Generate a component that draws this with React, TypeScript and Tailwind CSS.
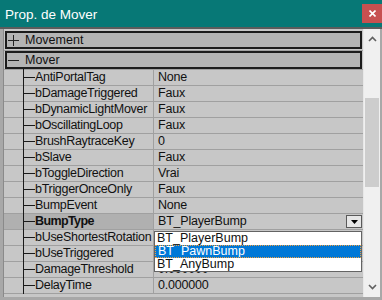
import React from 'react';

type Prop = { name: string; value: string; active?: boolean };

const props: Prop[] = [
  { name: 'AntiPortalTag', value: 'None' },
  { name: 'bDamageTriggered', value: 'Faux' },
  { name: 'bDynamicLightMover', value: 'Faux' },
  { name: 'bOscillatingLoop', value: 'Faux' },
  { name: 'BrushRaytraceKey', value: '0' },
  { name: 'bSlave', value: 'Faux' },
  { name: 'bToggleDirection', value: 'Vrai' },
  { name: 'bTriggerOnceOnly', value: 'Faux' },
  { name: 'BumpEvent', value: 'None' },
  { name: 'BumpType', value: 'BT_PlayerBump', active: true },
  { name: 'bUseShortestRotation', value: '' },
  { name: 'bUseTriggered', value: '' },
  { name: 'DamageThreshold', value: '0.000000' },
  { name: 'DelayTime', value: '0.000000' },
];

const Category = ({ label, open }: { label: string; open: boolean }) => (
  <div className="h-[18px] mx-[1px] border-2 border-[#1c1c1c] bg-[#b4b4b4] flex items-center">
    <span className="ml-[1px] mr-[6px] flex">
      <svg width="11" height="11" viewBox="0 0 11 11">
        <path d="M0 5.5h11" stroke="#222" strokeWidth="1" />
        {!open && <path d="M5.5 0v11" stroke="#222" strokeWidth="1" />}
      </svg>
    </span>
    <span className="text-[12.5px]">{label}</span>
  </div>
);

const Row = ({ p }: { p: Prop }) => (
  <div className="h-[16px] flex border-b border-[#a0a0a0]">
    <div className={`w-[19px] ${p.active ? 'bg-[#b0b0b0]' : ''}`} />
    <div className={`w-[130px] flex items-center relative ${p.active ? 'bg-[#b0b0b0]' : ''}`}>
      <div className="absolute left-0 top-[-1px] bottom-[-1px] w-[1px] bg-[#1a1a1a]" />
      <div className="w-[12px] h-[1px] bg-[#1a1a1a]" />
      <span className={p.active ? 'font-bold tracking-[-0.6px]' : 'tracking-[-0.3px]'}>{p.name}</span>
    </div>
    <div className="flex-1 border-l border-[#a0a0a0] flex items-center pl-[4px] relative">
      <span className="tracking-[-0.2px]">{p.value}</span>
      {p.active && (
        <div className="absolute right-[1px] top-[1px] w-[16px] h-[13px] bg-[#e6e6e6] border border-[#5a5a5a] flex items-center justify-center">
          <svg width="7" height="4" viewBox="0 0 7 4">
            <path d="M0 0h7L3.5 4z" fill="#000" />
          </svg>
        </div>
      )}
    </div>
  </div>
);

export default function App() {
  return (
    <div
      className="w-[382px] h-[300px] overflow-hidden flex flex-col bg-[#646464] text-[12.5px] text-[#111]"
      style={{ fontFamily: '"Liberation Sans", Arial, sans-serif' }}
    >
      <div className="h-[27px] bg-[#077876] flex items-start justify-between">
        <span className="text-white text-[13.5px] pl-[5px] pt-[5px]">Prop. de Mover</span>
        <div className="mt-[4px] w-[20px] h-[19px] bg-[#c75050] flex items-center justify-center">
          <svg width="7" height="7" viewBox="0 0 7 7">
            <path d="M0.5 0.5l6 6M6.5 0.5l-6 6" stroke="#fff" strokeWidth="1.6" />
          </svg>
        </div>
      </div>
      <div className="flex-1 flex border-t-2 border-[#5c5c5c] pl-[3px] pb-[3px] pr-[2px] bg-[#a8a8a8]">
        <div className="flex-1 flex flex-col bg-[#c7c7c7] border-l border-[#8a8a8a] relative">
          <div className="h-[2px]" />
          <Category label="Movement" open={false} />
          <div className="h-[2px] border-b border-[#a0a0a0]" />
          <Category label="Mover" open={true} />
          <div className="h-[1px] border-b border-[#a0a0a0]" />
          {props.map((p) => (
            <Row key={p.name} p={p} />
          ))}
          <div className="absolute left-[150px] top-[202px] w-[208px] bg-white border border-[#646464] flex flex-col text-[12.5px] leading-[13px]">
            <div className="h-[13px] flex items-center pl-[2px] overflow-hidden">BT_PlayerBump</div>
            <div className="h-[13px] flex items-center pl-[2px] overflow-hidden bg-[#0078d7] text-white border border-dotted border-[#f0a040]">
              BT_PawnBump
            </div>
            <div className="h-[13px] flex items-center pl-[2px] overflow-hidden">BT_AnyBump</div>
          </div>
        </div>
        <div className="w-[17px] bg-[#f0f0f0] flex flex-col border-l border-[#e8e8e8]">
          <div className="h-[20px] flex items-center justify-center">
            <svg width="9" height="6" viewBox="0 0 9 6">
              <path d="M1 5l3.5-3.5L8 5" stroke="#606060" strokeWidth="1.6" fill="none" />
            </svg>
          </div>
          <div className="h-[49px]" />
          <div className="h-[89px] mx-[1px] bg-[#cdcdcd]" />
          <div className="flex-1" />
          <div className="h-[20px] flex items-center justify-center">
            <svg width="9" height="6" viewBox="0 0 9 6">
              <path d="M1 1l3.5 3.5L8 1" stroke="#606060" strokeWidth="1.6" fill="none" />
            </svg>
          </div>
        </div>
      </div>
    </div>
  );
}
